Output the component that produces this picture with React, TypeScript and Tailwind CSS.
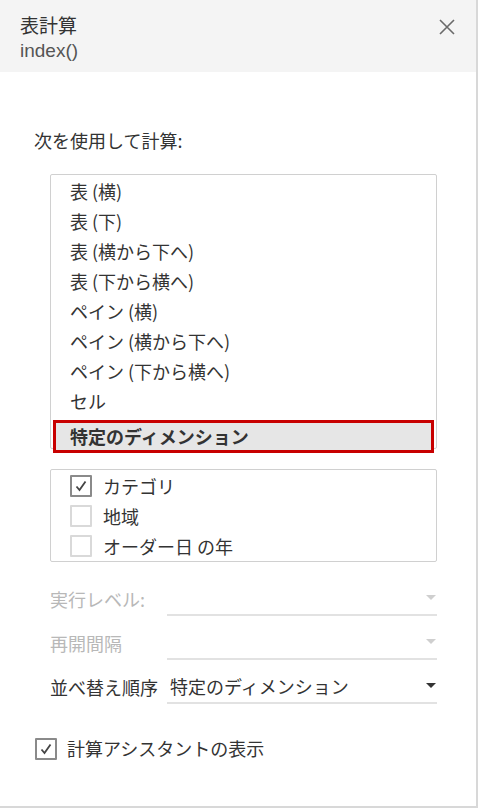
import React from "react";

const items = [
  "表 (横)",
  "表 (下)",
  "表 (横から下へ)",
  "表 (下から横へ)",
  "ペイン (横)",
  "ペイン (横から下へ)",
  "ペイン (下から横へ)",
  "セル",
];

function Check({ checked }: { checked: boolean }) {
  return (
    <div
      className={
        checked
          ? "w-[22px] h-[22px] border-2 border-[#8a8a8a] rounded-[1px] bg-white flex items-center justify-center shrink-0"
          : "w-[22px] h-[22px] border-2 border-[#d9d9d9] rounded-[1px] bg-white flex items-center justify-center shrink-0"
      }
    >
      {checked && (
        <svg width="14" height="14" viewBox="0 0 14 14">
          <path d="M2.5 7.5 L5.5 11 L11.5 2.5" fill="none" stroke="#444" strokeWidth="1.8" />
        </svg>
      )}
    </div>
  );
}

function Arrow({ dark }: { dark?: boolean }) {
  return (
    <svg width="10" height="6" viewBox="0 0 10 6">
      <path d="M0 0 L10 0 L5 5 Z" fill={dark ? "#333" : "#cfcfcf"} />
    </svg>
  );
}

function Row({ label, value, active }: { label: string; value?: string; active?: boolean }) {
  return (
    <div className="flex items-stretch h-[34px]">
      <div
        className={
          active
            ? "w-[117px] flex items-center text-[18px] text-[#333]"
            : "w-[117px] flex items-center text-[18px] text-[#b8b8b8]"
        }
      >
        {label}
      </div>
      <div className="flex-1 border-b-2 border-[#e2e2e2] flex items-center justify-between pl-[3px] pr-[1px] text-[18px] text-[#333]">
        <span>{value ?? ""}</span>
        <Arrow dark={active} />
      </div>
    </div>
  );
}

export default function App() {
  const font = { fontFamily: '"Noto Sans CJK JP", "Liberation Sans", sans-serif' };
  return (
    <div className="w-[480px] h-[809px] bg-white" style={font}>
      <div className="w-[478px] h-[808px] border-r-2 border-b-2 border-[#d8d8d8] flex flex-col">
        <div className="h-[72px] shrink-0 bg-[#f4f4f4] flex justify-between pl-[20px] pr-[21px] pt-[13px]">
          <div className="flex flex-col">
            <div className="text-[19px] leading-[24px] text-[#333]">表計算</div>
            <div className="mt-[3px] text-[19px] leading-[22px] text-[#555]" style={{ fontFamily: '"Liberation Sans", sans-serif' }}>
              index()
            </div>
          </div>
          <svg width="16" height="16" viewBox="0 0 16 16" className="mt-[6px]">
            <path d="M1 1 L15 15 M15 1 L1 15" stroke="#6a6a6a" strokeWidth="1.6" />
          </svg>
        </div>
        <div className="pl-[34px] mt-[56px] text-[18px] leading-[24px] text-[#333]">次を使用して計算:</div>
        <div className="ml-[50px] mt-[22px] w-[387px] h-[275px] shrink-0 border border-[#d0d0d0] rounded-[2px] relative">
          <div className="pt-[1px]">
            {items.map((t) => (
              <div key={t} className="h-[30px] pl-[19px] flex items-center text-[18px] text-[#333]">
                {t}
              </div>
            ))}
          </div>
          <div className="absolute left-[2px] top-[245px] w-[381px] h-[33px] border-[3px] border-[#c80000] bg-[#e6e6e6] pl-[14px] flex items-center text-[18px] font-bold text-[#333]">
            特定のディメンション
          </div>
        </div>
        <div className="ml-[50px] mt-[20px] w-[387px] h-[93px] shrink-0 border border-[#d0d0d0] rounded-[2px] pt-[1px]">
          {[
            { t: "カテゴリ", c: true },
            { t: "地域", c: false },
            { t: "オーダー日 の年", c: false },
          ].map((r) => (
            <div key={r.t} className="h-[30px] pl-[19px] flex items-center gap-[11px] text-[18px] text-[#333]">
              <Check checked={r.c} />
              <span>{r.t}</span>
            </div>
          ))}
        </div>
        <div className="ml-[50px] mt-[20px] w-[387px] flex flex-col gap-[10px]">
          <Row label="実行レベル:" />
          <Row label="再開間隔" />
          <Row label="並べ替え順序" value="特定のディメンション" active />
        </div>
        <div className="ml-[35px] mt-[31px] flex items-center gap-[10px] text-[18px] text-[#333]">
          <Check checked />
          <span>計算アシスタントの表示</span>
        </div>
      </div>
    </div>
  );
}
